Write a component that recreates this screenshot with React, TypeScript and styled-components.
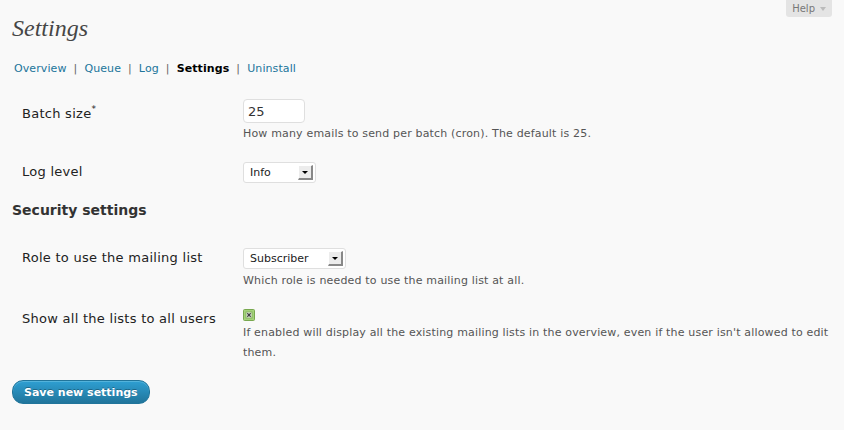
import React from "react";
import styled, { createGlobalStyle } from "styled-components";

const Global = createGlobalStyle`
  html, body { margin: 0; padding: 0; background: #f9f9f9; }
  body { font-family: "DejaVu Sans", Verdana, sans-serif; color: #333; }
`;

const Page = styled.div`
  padding: 0 12px;
  width: 844px;
  box-sizing: border-box;
`;

const Header = styled.div`
  display: flex;
  justify-content: space-between;
  align-items: flex-start;
`;

const Title = styled.h2`
  margin: 14px 0 0 0;
  font-family: "Liberation Serif", "Times New Roman", serif;
  font-style: italic;
  font-weight: normal;
  font-size: 24px;
  line-height: 29px;
  color: #464646;
`;

const HelpTab = styled.div`
  display: flex;
  align-items: center;
  gap: 5px;
  height: 17px;
  padding: 0 6px;
  background: #e4e4e4;
  border-radius: 0 0 3px 3px;
  font-size: 10px;
  color: #777;
`;

const Caret = styled.span`
  width: 0;
  height: 0;
  border-left: 3px solid transparent;
  border-right: 3px solid transparent;
  border-top: 4px solid #bbb;
  margin-top: 1px;
`;

const SubNav = styled.ul`
  display: flex;
  gap: 7px;
  list-style: none;
  margin: 16px 0 0 0;
  padding: 0 0 0 2px;
  font-size: 11px;
  line-height: 20px;
  letter-spacing: 0.1px;
`;

const NavLink = styled.a<{ $current?: boolean }>`
  color: ${(p) => (p.$current ? "#000" : "#21759b")};
  font-weight: ${(p) => (p.$current ? "bold" : "normal")};
  text-decoration: none;
`;

const Sep = styled.li`
  color: #666;
`;

const Section = styled.div<{ $top: number }>`
  display: flex;
  flex-direction: column;
  gap: 18px;
  margin-top: ${(p) => p.$top}px;
`;

const Row = styled.div`
  display: grid;
  grid-template-columns: 221px 1fr;
  padding-left: 10px;
  margin-right: -6px;
  align-items: start;
`;

const Label = styled.div<{ $pad?: number }>`
  font-size: 13px;
  line-height: 20px;
  letter-spacing: 0.27px;
  color: #222;
  padding-top: ${(p) => p.$pad ?? 0}px;
  sup {
    font-size: 9px;
    line-height: 0;
    vertical-align: 6px;
  }
`;

const Control = styled.div`
  display: flex;
  flex-direction: column;
  align-items: flex-start;
`;

const TextInput = styled.input`
  box-sizing: border-box;
  width: 62px;
  height: 24px;
  margin: 0 0 1px 0;
  padding: 0 4px;
  border: 1px solid #dfdfdf;
  border-radius: 4px;
  background: #fff;
  font-family: "DejaVu Sans", Verdana, sans-serif;
  font-size: 13px;
  color: #333;
  outline: none;
`;

const Select = styled.div`
  box-sizing: border-box;
  display: flex;
  align-items: center;
  justify-content: space-between;
  height: 21px;
  margin-bottom: 2px;
  padding: 0 2px 0 6px;
  border: 1px solid #dfdfdf;
  border-radius: 3px;
  background: #fff;
  font-size: 11px;
  color: #222;
`;

const ArrowBox = styled.span`
  box-sizing: border-box;
  display: flex;
  align-items: center;
  justify-content: center;
  width: 15px;
  height: 15px;
  background: #ececec;
  border-top: 1px solid #fff;
  border-left: 1px solid #fff;
  border-right: 2px solid #888;
  border-bottom: 2px solid #888;
  &::after {
    content: "";
    border-left: 3px solid transparent;
    border-right: 3px solid transparent;
    border-top: 3px solid #000;
  }
`;

const CheckWrap = styled.span`
  display: block;
  width: 12px;
  height: 12px;
  margin-bottom: 2px;
  svg {
    display: block;
  }
`;

const Desc = styled.div`
  font-size: 11px;
  line-height: 20px;
  letter-spacing: 0.17px;
  color: #555;
`;

const Heading = styled.h3`
  margin: 15px 0 0 0;
  font-size: 14px;
  line-height: 20px;
  font-weight: bold;
  color: #333;
`;

const Button = styled.button`
  margin-top: 17px;
  height: 24px;
  padding: 0 11px;
  border: 1px solid #21759b;
  border-radius: 11px;
  background: linear-gradient(to bottom, #2e9fd2, #21759b);
  color: #fff;
  font-family: "DejaVu Sans", Verdana, sans-serif;
  font-size: 11px;
  font-weight: bold;
  text-shadow: 0 -1px 0 rgba(0, 0, 0, 0.3);
  box-shadow: inset 0 1px 0 rgba(120, 200, 230, 0.5);
  cursor: pointer;
`;

const Checkbox = () => (
  <CheckWrap>
    <svg width="12" height="12" viewBox="0 0 12 12">
      <rect x="0.5" y="0.5" width="11" height="11" rx="1" fill="#a3d27a" stroke="#78a84f" />
      <rect x="3" y="3" width="6" height="6" fill="#f2f8ec" stroke="#86b061" />
      <path d="M4.3 4.3 L7.7 7.7 M7.7 4.3 L4.3 7.7" stroke="#3f3f3f" strokeWidth="1.3" />
    </svg>
  </CheckWrap>
);

const FakeSelect = ({ value, width }: { value: string; width: number }) => (
  <Select style={{ width }}>
    <span>{value}</span>
    <ArrowBox />
  </Select>
);

const navItems = ["Overview", "Queue", "Log", "Settings", "Uninstall"];

export default function App() {
  return (
    <Page>
      <Global />
      <Header>
        <Title>Settings</Title>
        <HelpTab>
          Help <Caret />
        </HelpTab>
      </Header>
      <SubNav>
        {navItems.map((item, i) => (
          <React.Fragment key={item}>
            {i > 0 && <Sep>|</Sep>}
            <li>
              <NavLink href="#" $current={item === "Settings"}>
                {item}
              </NavLink>
            </li>
          </React.Fragment>
        ))}
      </SubNav>

      <Section $top={20}>
        <Row>
          <Label $pad={5}>
            Batch size<sup>*</sup>
          </Label>
          <Control>
            <TextInput defaultValue="25" />
            <Desc>How many emails to send per batch (cron). The default is 25.</Desc>
          </Control>
        </Row>
        <Row>
          <Label>Log level</Label>
          <Control>
            <FakeSelect value="Info" width={73} />
          </Control>
        </Row>
      </Section>

      <Heading>Security settings</Heading>

      <Section $top={28}>
        <Row>
          <Label>Role to use the mailing list</Label>
          <Control>
            <FakeSelect value="Subscriber" width={103} />
            <Desc>Which role is needed to use the mailing list at all.</Desc>
          </Control>
        </Row>
        <Row>
          <Label>Show all the lists to all users</Label>
          <Control>
            <Checkbox />
            <Desc>
              If enabled will display all the existing mailing lists in the overview, even if the user isn't
              allowed to edit them.
            </Desc>
          </Control>
        </Row>
      </Section>

      <Button>Save new settings</Button>
    </Page>
  );
}
